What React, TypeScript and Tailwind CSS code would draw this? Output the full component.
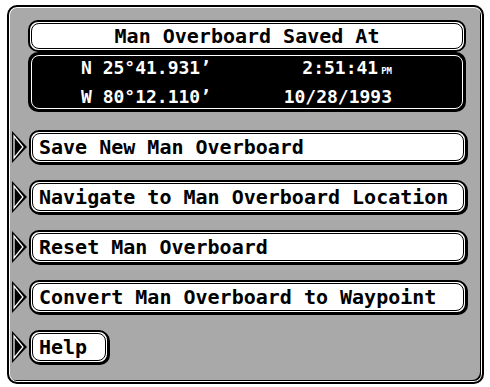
const mono = "font-['DejaVu_Sans_Mono','Liberation_Mono',monospace]";

const items = [
  'Save New Man Overboard',
  'Navigate to Man Overboard Location',
  'Reset Man Overboard',
  'Convert Man Overboard to Waypoint',
];

function Arrow() {
  return (
    <svg width="15" height="32" viewBox="0 0 15 32" className="shrink-0">
      <polygon points="0,0 15,16 0,32" fill="#000" />
      <polygon points="2,5 11,16 2,27" fill="#000" stroke="#fff" strokeWidth="1.2" />
    </svg>
  );
}

function MenuButton({ label, wide = true }: { label: string; wide?: boolean }) {
  return (
    <div
      className={`h-[34px] rounded-[10px] border-2 border-black bg-white p-px shadow-[1px_1px_0_0_#000] ${
        wide ? 'flex-1' : 'w-[80px]'
      }`}
    >
      <div className="flex h-full items-center rounded-[8px] border border-black bg-white pl-[6px]">
        <span className={`${mono} text-[20px] font-bold leading-none text-black whitespace-pre`}>{label}</span>
      </div>
    </div>
  );
}

export default function App() {
  return (
    <div className="h-[387px] w-[490px] bg-white pt-[5px] pl-[7px]">
      <div className="flex h-[379px] w-[477px] flex-col rounded-[10px] border-2 border-black bg-[#a9a9a9] pt-[13px] shadow-[inset_0_0_0_1px_#fff,inset_-2px_-2px_0_0_#000]">
        {/* header */}
        <div className="ml-[19px] mr-[16px] flex flex-col">
          <div className="flex h-[32px] items-center justify-center rounded-[10px] border-2 border-black bg-white p-px">
            <div className="flex h-full w-full items-center justify-center rounded-[8px] border border-black bg-white">
              <span className={`${mono} text-[20px] font-bold leading-none text-black whitespace-pre`}>
                Man Overboard Saved At
              </span>
            </div>
          </div>
          <div className="h-[60px] rounded-[10px] border-2 border-black bg-black p-px">
            <div className="flex h-full flex-col justify-center rounded-[8px] border border-white bg-black">
              <div className={`${mono} flex justify-between pl-[49px] pr-[70px] text-[18px] font-bold leading-[25px] text-white`}>
                <span className="whitespace-pre">N 25°41.931’</span>
                <span>
                  2:51:41<span className="ml-[3px] text-[9px]">PM</span>
                </span>
              </div>
              <div className={`${mono} flex justify-between pl-[49px] pr-[70px] text-[18px] font-bold leading-[25px] text-white`}>
                <span className="whitespace-pre">W 80°12.110’</span>
                <span>10/28/1993</span>
              </div>
            </div>
          </div>
        </div>

        {/* menu */}
        <div className="mt-[18px] flex flex-col gap-[16px] pl-[3px] pr-[15px]">
          {items.map((label) => (
            <div key={label} className="flex items-center gap-[2px]">
              <Arrow />
              <MenuButton label={label} />
            </div>
          ))}
          <div className="flex items-center gap-[2px]">
            <Arrow />
            <MenuButton label="Help" wide={false} />
          </div>
        </div>
      </div>
    </div>
  );
}
